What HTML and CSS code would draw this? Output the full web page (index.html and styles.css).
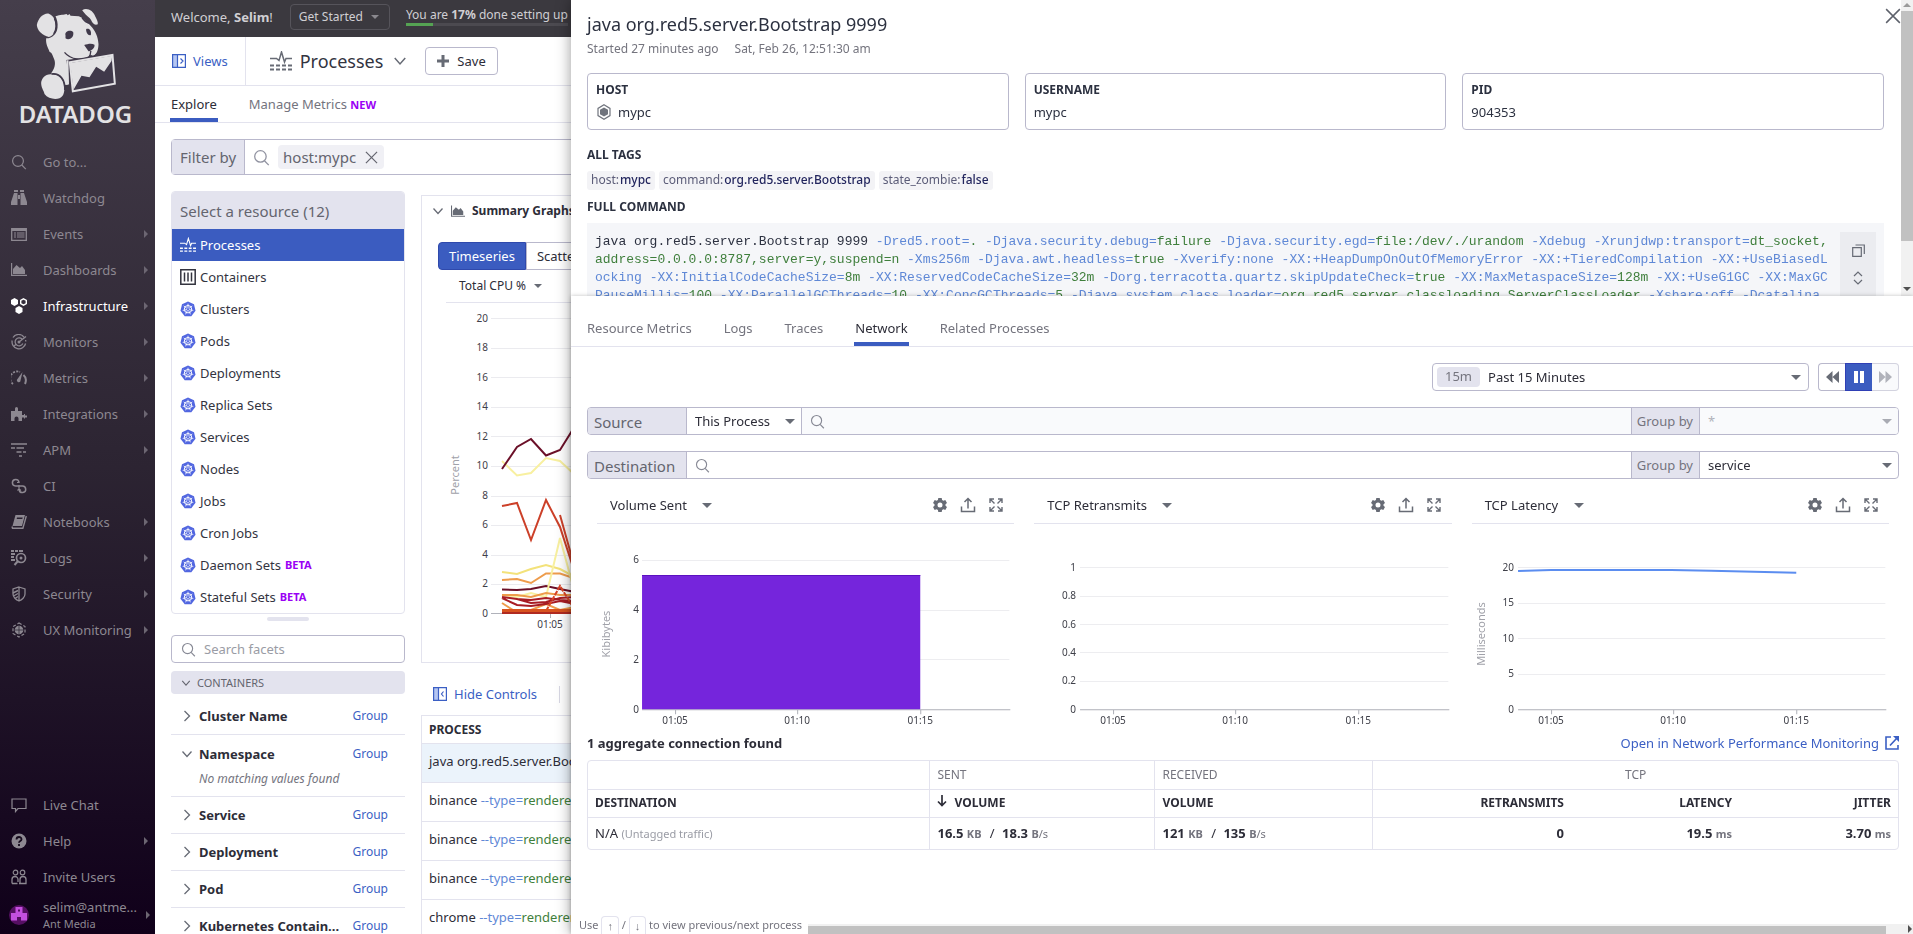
FILE: index.html
```html
<!DOCTYPE html>
<html lang="en">
<head>
  <meta charset="UTF-8">
  <meta name="viewport" content="width=device-width, initial-scale=1.0">
  <title>Processes | Datadog</title>
  <link rel="stylesheet" href="styles.css">
</head>
<body>
  <!-- shared icons -->
  <svg class="defs" aria-hidden="true">
    <symbol id="i-search" viewBox="0 0 16 16"><circle cx="7" cy="7" r="5.4" fill="none" stroke="currentColor" stroke-width="1.2"/><path d="M10.8 11l4 4.2" fill="none" stroke="currentColor" stroke-width="1.2"/></symbol>
    <symbol id="i-down" viewBox="0 0 12 12"><path d="M1.5 3.5L6 8.5l4.500-5" fill="none" stroke="currentColor" stroke-width="1.3"/></symbol>
    <symbol id="i-right" viewBox="0 0 12 12"><path d="M3.500 1L8.500 6l-5 5" fill="none" stroke="currentColor" stroke-width="1.3"/></symbol>
    <symbol id="i-close" viewBox="0 0 14 14"><path d="M1 1l12 12M13 1L1 13" fill="none" stroke="currentColor" stroke-width="1.3"/></symbol>
    <symbol id="i-process" viewBox="0 0 22 20"><path d="M0 7.500h6.500L9 9.500 11.500 1l3 10 1.500-3.500h6" fill="none" stroke="currentColor" stroke-width="1.500"/><path d="M0 14.500h4m2 0h4m2 0h4m2 0h4M0 18.500h4m2 0h4m2 0h4m2 0h4" stroke="currentColor" stroke-width="1.800"/></symbol>
    <symbol id="i-area" viewBox="0 0 16 14"><path d="M.6 0v12.400H16" fill="none" stroke="currentColor" stroke-width="1.200"/><path d="M2 11V6l3.500-4L9 5l2-2 3 4v4z" fill="currentColor"/></symbol>
    <symbol id="i-kube" viewBox="0 0 16 16">
      <path d="M8 .4l6 2.900 1.500 6.500-4.200 5.400H4.700L.5 9.800 2 3.300z" fill="#5166e0"/>
      <circle cx="8" cy="8.200" r="3.700" fill="none" stroke="#fff" stroke-width="1"/>
      <path d="M8 2.700v4.500M12.300 4.900L8.700 7.600M13.300 9.500L9 8.500M10.400 13.300L8.500 9.200M5.600 13.300l1.900-4.100M2.700 9.500L7 8.500M3.700 4.900l3.600 2.700" stroke="#fff" stroke-width=".8"/>
    </symbol>
    <symbol id="i-gear" viewBox="0 0 16 16"><path fill="currentColor" fill-rule="evenodd" d="M6.300 1h3.400l.4 2 1.300.700 1.900-.700 1.700 3-1.500 1.300v1.500L15 10l-1.700 3-1.900-.700-1.300.700-.4 2H6.300l-.4-2-1.300-.700-1.900.700L1 10l1.500-1.300V7.300L1 6l1.700-3 1.900.700L5.900 3zM8 5.500a2.500 2.500 0 100 5 2.500 2.500 0 000-5z"/></symbol>
    <symbol id="i-share" viewBox="0 0 16 16"><path d="M1.500 9.500v5h13v-5M8 11.500V2M4.500 5L8 1.500 11.500 5" fill="none" stroke="currentColor" stroke-width="1.500"/></symbol>
    <symbol id="i-expand" viewBox="0 0 16 16"><path d="M2 6V2h4M10 2h4v4M14 10v4h-4M6 14H2v-4M2 2l4.500 4.500M14 2L9.500 6.500M14 14L9.500 9.500M2 14l4.500-4.500" fill="none" stroke="currentColor" stroke-width="1.400"/></symbol>
  </svg>

  <div class="app">
    <nav class="sidebar">
      <a class="logo" href="#">
        <svg viewBox="100 15 260 285" aria-hidden="true">
          <g fill="#e3e2e4">
            <path d="M150 38c-17-2-32 14-36 34 1 17 17 32 36 36 12-3 20-16 21-28 1-18-5-36-21-42z"/>
            <path d="M170 46C185 40 196 42 203 39L207 43 212 39 215 44 240 46C252 50 264 62 276 75C289 89 298 107 299 129C299 144 294 165 278 165L272 161 262 179 206 183 210 250 198 252C196 232 180 216 156 218C166 205 172 190 166 175C160 158 158 155 152 152C148 140 140 130 142 112C162 112 174 96 176 80C178 66 174 54 170 46z"/>
            <path d="M250 28c14-10 34 2 39 18 4 8 9 16 8 24-14 5-17-9-24-18-8-6-16-14-23-24z"/>
            <path d="M160 220c-20-3-34 14-33 28 1 15 10 24 10 31 10 14 30 17 45 13 15-6 16-27 14-40-2-18-18-32-36-32z"/>
          </g>
          <path d="M158 219c25-4 41 17 40 48M167 52c7 12 7 35-2 47M250 50c7 12 18 16 25 17" fill="none" stroke="#40394a" stroke-width="5"/>
          <path d="M200 103c-4-12 15-18 23-10 4 18-13 26-23 19zM262 84c9-4 17 4 14 18-8 3-15-7-14-18zM256 132c10-3 22-6 31-1 2 10-11 19-18 20z" fill="#40394a"/>
          <path d="M197 154c20 24 54 25 76 13l3-17M276 164c8 5 14 2 20-6" fill="none" stroke="#40394a" stroke-width="4"/>
          <path d="M202 177l144-19 6 94-132 25z" fill="#40394a"/>
          <path d="M203 178h6l1 72-8 2z" fill="#e3e2e4"/>
          <path d="M213 184l128-22 7 86-126 23z" fill="none" stroke="#e3e2e4" stroke-width="6"/>
          <path d="M214 186l126-22-2 16-22 32-24-15-20 32-24-5-24 42z" fill="#e3e2e4"/>
        </svg>
        <span>DATADOG</span>
      </a>
      <ul class="nav">
        <li><a href="#"><svg><use href="#i-search"/></svg>Go to...</a></li>
        <li><a href="#"><svg viewBox="0 0 16 16"><path fill="currentColor" d="M3 0h4v2H3zm6 0h4v2H9zM3 3h3.500v12H0v-3zm6.500 0H13l3 9v3H9.500zM7 5h2v4H7z"/></svg>Watchdog</a></li>
        <li><a href="#"><svg viewBox="0 0 16 16"><path d="M.7 2.700h14.600v11.600H.7z" fill="none" stroke="currentColor" stroke-width="1.300"/><path d="M1 3h14v2H1zM3 6.500h2v1H3zm3 0h7.500v1H6zM3 8.500h2v1H3zm3 0h7.500v1H6zM3 10.500h2v1H3zm3 0h7.500v1H6z" fill="currentColor"/></svg>Events<i></i></a></li>
        <li><a href="#"><svg><use href="#i-area"/></svg>Dashboards<i></i></a></li>
        <li class="active"><a href="#"><svg viewBox="0 0 16 16"><path fill="currentColor" d="M3.500 0L7 2v4L3.500 8 0 6V2zM8 8l3.500 2v4L8 16l-3.500-2v-4z"/><path d="M12.500.8l2.800 1.600v3.200l-2.800 1.600-2.800-1.600V2.400z" fill="none" stroke="currentColor" stroke-width="1.400"/></svg>Infrastructure<i></i></a></li>
        <li><a href="#"><svg viewBox="0 0 16 16"><path d="M13 3.200A6.700 6.700 0 002 3.500M1.200 6.500a6.800 6.800 0 0013.400 3M11 5a4 4 0 10.800 4.500M8 8l7-5.500M14.600 6l.2 1.500M3 12.500l1.500-1.800" fill="none" stroke="currentColor" stroke-width="1.300"/><circle cx="8" cy="8" r="1.500" fill="currentColor"/></svg>Monitors<i></i></a></li>
        <li><a href="#"><svg viewBox="0 0 16 16"><path d="M2 14A7 7 0 019 2" fill="none" stroke="currentColor" stroke-width="1.800" stroke-dasharray="2 1.200"/><path d="M12.500 5c2.300 2 3 5.500 1.500 9" fill="none" stroke="currentColor" stroke-width="2"/><path d="M11.500 2L9.300 11.500a2 2 0 01-3.500-1.500z" fill="currentColor"/></svg>Metrics<i></i></a></li>
        <li><a href="#"><svg viewBox="0 0 16 16"><path fill="currentColor" d="M0 5h4V2.500a1.500 1.500 0 113 0V5h4v4h2V8h1v1.500h2v2h-2v1h-1v-1h-2V15H7.500v-2.500a2 2 0 00-4 0V15H0z"/></svg>Integrations<i></i></a></li>
        <li><a href="#"><svg viewBox="0 0 16 16"><path d="M0 2h16M0 6h4m1.500 0H13M5.500 10h5m1.500 0h3M8 14h3" stroke="currentColor" stroke-width="1.700"/></svg>APM<i></i></a></li>
        <li><a href="#"><svg viewBox="0 0 16 16"><path d="M4.500 8A3.300 3.300 0 118 4.500M4.500 8h7a3.300 3.300 0 11-3.300 4" fill="none" stroke="currentColor" stroke-width="1.500"/><path d="M8 11V7m-1.500 5.500L8 11l2 1.500M6 4.500h2.500" stroke="currentColor" fill="none" stroke-width="1.200"/></svg>CI</a></li>
        <li><a href="#"><svg viewBox="0 0 16 16"><path fill="currentColor" fill-rule="evenodd" d="M4.500 1h9.500L11 12H1.500zM6 3.500L5.700 5h5.600l.4-1.500z"/><path d="M15.300 2l-3.400 12.200H1.500L1 12.500" fill="none" stroke="currentColor" stroke-width="1.400"/></svg>Notebooks<i></i></a></li>
        <li><a href="#"><svg viewBox="0 0 16 16"><path d="M0 1h3m1 0h3m1 0h4M0 4h4M0 7h3M0 10h4" stroke="currentColor" stroke-width="1.800"/><circle cx="10" cy="8" r="4.500" fill="none" stroke="currentColor" stroke-width="1.700"/><path d="M7 11l-3.500 4" stroke="currentColor" stroke-width="2"/><circle cx="10" cy="8" r="1.500" fill="currentColor"/></svg>Logs<i></i></a></li>
        <li><a href="#"><svg viewBox="0 0 16 16"><path d="M8 1l6 2v5c0 3-3 6-6 7-3-1-6-4-6-7V3zM8 1v14" fill="none" stroke="currentColor" stroke-width="1.300"/><path d="M2 7l5-2.500M2.500 10L7 7.500M4 12.500l3-2" stroke="currentColor" stroke-width="1.400"/></svg>Security<i></i></a></li>
        <li><a href="#"><svg viewBox="0 0 16 16"><circle cx="8" cy="8" r="4.300" fill="currentColor"/><path d="M8 1l6 3.500v7L8 15l-6-3.500v-7z" fill="none" stroke="currentColor" stroke-width="1.200" stroke-dasharray="3 2"/><path d="M4 8h8M8 4v8" stroke="#2a2230" stroke-width=".7"/></svg>UX Monitoring<i></i></a></li>
      </ul>
      <ul class="nav nav-bottom">
        <li><a href="#"><svg viewBox="0 0 16 16"><path d="M1 2h14v9.500H7L4.500 14.500v-3H1z" fill="none" stroke="currentColor" stroke-width="1.200"/></svg>Live Chat</a></li>
        <li><a href="#"><svg viewBox="0 0 16 16"><circle cx="8" cy="8" r="7.500" fill="currentColor"/><path d="M5.500 6.500a2.500 2.500 0 115 0c0 1.500-2.500 1.700-2.500 3.200" fill="none" stroke="#150a1c" stroke-width="1.800"/><path d="M7.100 11h1.800v1.900H7.100z" fill="#150a1c"/></svg>Help<i></i></a></li>
        <li><a href="#"><svg viewBox="0 0 16 16"><circle cx="4.500" cy="3.500" r="2.300" fill="none" stroke="currentColor" stroke-width="1.200"/><circle cx="11.500" cy="3.500" r="2.300" fill="none" stroke="currentColor" stroke-width="1.200"/><path d="M1 14.500v-4a3 3 0 016 0V13M1 14.500h5.500M9 14.500v-4a3 3 0 016 0v4H8" fill="none" stroke="currentColor" stroke-width="1.300"/></svg>Invite Users</a></li>
        <li class="user"><a href="#">
          <svg viewBox="0 0 20 20"><circle cx="10" cy="10" r="10" fill="#560f63"/><path fill="#c44fe0" fill-rule="evenodd" d="M6.500 2h7v6H18v7.500h-6V12H8v3.500H2V8h4.500zM9 4.500v2h2v-2z"/></svg>
          <span>selim@antme...<small>Ant Media</small></span><i></i></a></li>
      </ul>
    </nav>

    <div class="page">
      <header class="topbar">
        <span>Welcome, <b>Selim</b>!</span>
        <button type="button" class="get-started">Get Started <span class="caret"></span></button>
        <div class="setup">You are <b>17%</b> done setting up
          <div class="progress"><div class="progress-fill"></div></div>
        </div>
      </header>

      <div class="titlebar">
        <a class="views" href="#"><svg width="14" height="14" viewBox="0 0 14 14"><path fill="#b5c6f2" d="M1 1h4v12H1z"/><path d="M.6.600h12.800v12.800H.600zM5.500.600v12.800M8.500 4.500L11 7l-2.500 2.500" fill="none" stroke="currentColor" stroke-width="1.200"/></svg>Views</a>
        <h1><svg width="22" height="20"><use href="#i-process"/></svg>Processes<svg width="14" height="14"><use href="#i-down"/></svg></h1>
        <button type="button" class="save"><svg width="12" height="12" viewBox="0 0 12 12"><path d="M6 0v12M0 6h12" stroke="#676b75" stroke-width="3"/></svg>Save</button>
      </div>

      <div class="tabs main-tabs">
        <a class="tab active" href="#">Explore</a>
        <a class="tab" href="#">Manage Metrics <b class="flag">NEW</b></a>
      </div>

      <div class="filter">
        <label for="filter">Filter by</label>
        <svg width="17" height="17"><use href="#i-search"/></svg>
        <span class="chip">host:mypc <svg width="13" height="13"><use href="#i-close"/></svg></span>
        <input id="filter" type="text">
      </div>

      <div class="columns">
        <aside class="facets">
          <div class="resources">
            <h2>Select a resource (12)</h2>
            <a class="selected" href="#"><svg><use href="#i-process"/></svg>Processes</a>
            <a href="#"><svg viewBox="0 0 16 16"><path d="M.8.800h14.400v14.400H.800zM4.500 3.500v9M8 3.500v9M11.500 3.500v9" fill="none" stroke="#33343f" stroke-width="1.500"/></svg>Containers</a>
            <a href="#"><svg><use href="#i-kube"/></svg>Clusters</a>
            <a href="#"><svg><use href="#i-kube"/></svg>Pods</a>
            <a href="#"><svg><use href="#i-kube"/></svg>Deployments</a>
            <a href="#"><svg><use href="#i-kube"/></svg>Replica Sets</a>
            <a href="#"><svg><use href="#i-kube"/></svg>Services</a>
            <a href="#"><svg><use href="#i-kube"/></svg>Nodes</a>
            <a href="#"><svg><use href="#i-kube"/></svg>Jobs</a>
            <a href="#"><svg><use href="#i-kube"/></svg>Cron Jobs</a>
            <a href="#"><svg><use href="#i-kube"/></svg>Daemon Sets <b class="flag">BETA</b></a>
            <a href="#"><svg><use href="#i-kube"/></svg>Stateful Sets <b class="flag">BETA</b></a>
          </div>
          <div class="handle"></div>
          <div class="facet-search">
            <svg width="15" height="15"><use href="#i-search"/></svg>
            <input type="text" placeholder="Search facets" aria-label="Search facets">
          </div>
          <div class="facet-group"><svg width="10" height="10"><use href="#i-down"/></svg>CONTAINERS</div>
          <div class="facet"><svg><use href="#i-right"/></svg><b>Cluster Name</b><a href="#">Group</a></div>
          <div class="facet open"><svg><use href="#i-down"/></svg><b>Namespace</b><a href="#">Group</a><em>No matching values found</em></div>
          <div class="facet"><svg><use href="#i-right"/></svg><b>Service</b><a href="#">Group</a></div>
          <div class="facet"><svg><use href="#i-right"/></svg><b>Deployment</b><a href="#">Group</a></div>
          <div class="facet"><svg><use href="#i-right"/></svg><b>Pod</b><a href="#">Group</a></div>
          <div class="facet"><svg><use href="#i-right"/></svg><b>Kubernetes Contain...</b><a href="#">Group</a></div>
        </aside>

        <main class="content">
          <section class="summary">
            <h3><svg width="12" height="12"><use href="#i-down"/></svg><svg width="14" height="13"><use href="#i-area"/></svg>Summary Graphs</h3>
            <div class="segmented">
              <button type="button" class="on">Timeseries</button><button type="button">Scatter Plot</button>
            </div>
            <button type="button" class="metric">Total CPU % <span class="caret"></span></button>
            <svg class="cpu-chart" width="600" height="340" viewBox="0 0 600 340">
              <g stroke="#ebebef">
                <path d="M68 15.500H600M68 45.500H600M68 74.500H600M68 104.500H600M68 133.500H600M68 163.500H600M68 193.500H600M68 222.500H600M68 252.500H600M68 281.500H600"/>
                <path d="M68 310.500H600M127.500 310v5" stroke="#b0b2ba"/>
              </g>
              <g class="axis" text-anchor="end">
                <text x="65" y="19">20</text><text x="65" y="48">18</text><text x="65" y="78">16</text><text x="65" y="107">14</text><text x="65" y="137">12</text><text x="65" y="166">10</text><text x="65" y="196">8</text><text x="65" y="225">6</text><text x="65" y="255">4</text><text x="65" y="284">2</text><text x="65" y="314">0</text>
              </g>
              <text class="axis" x="127" y="325" text-anchor="middle">01:05</text>
              <text class="axis-title" transform="rotate(-90 36 172)" x="36" y="172" text-anchor="middle">Percent</text>
              <g fill="none" stroke-width="2">
                <path stroke="#f8f0a0" d="M79 158l15 14.500 14-2.500 15-15 14 3 15 14"/>
                <path stroke="#6b1028" d="M79 166l15-22 14-8 15 16.500 14-5.500 15-24"/>
                <path stroke="#cc4029" d="M79 203l15-3 14 37 15-40 14 27 12 37M137 212l14 50"/>
                <path stroke="#f3e27a" d="M79 269l15 2 14-5 15-4 14 4 15 8"/>
                <path stroke="#ee9c4c" d="M79 277l15-1 14 4 15-9.500h14l15 5"/>
                <path stroke="#6b1028" d="M79 286.500l15 .5 14-1 15-3 14 3 15 3"/>
                <path stroke="#f8f0a0" d="M79 292l15 2 14-4 15 4 14-59 14 52"/>
                <path stroke="#ee9c4c" d="M79 292h15l14 2 15-4 14 2h15M79 300l11 7h18l15-6 14 6 15-3"/>
                <path stroke="#a81c24" d="M79 294l15 2 14 1 15-2 14 2 15 1M79 295l15 7 14 1 15-2 14-3 15 3M79 294l15 2 14 4 15-1 14-4 15-1"/>
                <path stroke="#d84427" d="M123 308l14-25 15 24" stroke-dasharray="5 1"/>
                <path stroke="#d8531f" d="M79 307h80M79 309h80"/>
                <path stroke="#b02a20" d="M79 310h80"/>
              </g>
            </svg>
          </section>

          <div class="table-bar">
            <a href="#"><svg width="14" height="14" viewBox="0 0 14 14"><path fill="#b5c6f2" d="M1 1h4v12H1z"/><path d="M.6.600h12.800v12.800H.600zM5.500.600v12.800M10.500 4.500L8.500 7l2 2.500" fill="none" stroke="currentColor" stroke-width="1.200"/></svg>Hide Controls</a>
            <span class="divider"></span>
          </div>
          <table class="processes">
            <thead><tr><th>PROCESS</th></tr></thead>
            <tbody>
              <tr class="current"><td>java org.red5.server.Bootstrap 9999</td></tr>
              <tr><td>binance <span class="opt">--type=</span><span class="val">renderer</span></td></tr>
              <tr><td>binance <span class="opt">--type=</span><span class="val">renderer</span></td></tr>
              <tr><td>binance <span class="opt">--type=</span><span class="val">renderer</span></td></tr>
              <tr><td>chrome <span class="opt">--type=</span><span class="val">renderer</span></td></tr>
            </tbody>
          </table>
        </main>
      </div>
    </div>
  </div>

  <!-- process side panel -->
  <div class="drawer" role="dialog" aria-label="Process details">
    <div class="drawer-head">
      <div class="drawer-info">
        <h2>java org.red5.server.Bootstrap 9999</h2>
        <p class="started"><span>Started 27 minutes ago</span><span>Sat, Feb 26, 12:51:30 am</span></p>
        <div class="cards">
          <div class="card"><h4>HOST</h4><p><svg width="16" height="16" viewBox="0 0 16 16"><path d="M8 .8l6 3.600v7.200l-6 3.600-6-3.600V4.400z" fill="none" stroke="#70747d" stroke-width="1.200"/><path d="M8 3.500l4 2.200v4.600l-4 2.200-4-2.200V5.700z" fill="#70747d"/></svg>mypc</p></div>
          <div class="card"><h4>USERNAME</h4><p>mypc</p></div>
          <div class="card"><h4>PID</h4><p>904353</p></div>
        </div>
        <h4 class="label">ALL TAGS</h4>
        <div class="tags">
          <span>host:<b>mypc</b></span><span>command:<b>org.red5.server.Bootstrap</b></span><span>state_zombie:<b>false</b></span>
        </div>
        <h4 class="label">FULL COMMAND</h4>
        <div class="command">
          <code>java org.red5.server.Bootstrap 9999 <span class="opt">-Dred5.root=</span><span class="val">.</span> <span class="opt">-Djava.security.debug=</span><span class="val">failure</span> <span class="opt">-Djava.security.egd=</span><span class="val">file:/dev/./urandom</span> <span class="opt">-Xdebug</span> <span class="opt">-Xrunjdwp:transport=</span><span class="val">dt_socket,address=0.0.0.0:8787,server=y,suspend=n</span> <span class="opt">-Xms256m</span> <span class="opt">-Djava.awt.headless=</span><span class="val">true</span> <span class="opt">-Xverify:none</span> <span class="opt">-XX:+HeapDumpOnOutOfMemoryError</span> <span class="opt">-XX:+TieredCompilation</span> <span class="opt">-XX:+UseBiasedLocking</span> <span class="opt">-XX:InitialCodeCacheSize=</span><span class="val">8m</span> <span class="opt">-XX:ReservedCodeCacheSize=</span><span class="val">32m</span> <span class="opt">-Dorg.terracotta.quartz.skipUpdateCheck=</span><span class="val">true</span> <span class="opt">-XX:MaxMetaspaceSize=</span><span class="val">128m</span> <span class="opt">-XX:+UseG1GC</span> <span class="opt">-XX:MaxGCPauseMillis=</span><span class="val">100</span> <span class="opt">-XX:ParallelGCThreads=</span><span class="val">10</span> <span class="opt">-XX:ConcGCThreads=</span><span class="val">5</span> <span class="opt">-Djava.system.class.loader=</span><span class="val">org.red5.server.classloading.ServerClassLoader</span> <span class="opt">-Xshare:off</span> <span class="opt">-Dcatalina</span></code>
          <div class="command-tools">
            <button type="button" aria-label="Copy"><svg width="13" height="13" viewBox="0 0 13 13"><path d="M.7 3.700h8.600v8.600H.700zM3.500 1h8.800v9" fill="none" stroke="currentColor" stroke-width="1.200"/></svg></button>
            <button type="button" aria-label="Expand"><svg width="10" height="14" viewBox="0 0 10 14"><path d="M1 5l4-4 4 4M1 9l4 4 4-4" fill="none" stroke="currentColor" stroke-width="1.200"/></svg></button>
          </div>
        </div>
      </div>
      <button type="button" class="close" aria-label="Close"><svg width="16" height="16"><use href="#i-close"/></svg></button>
      <div class="vscroll"><i class="up"></i><div class="vthumb"></div><i class="down"></i></div>
    </div>

    <div class="drawer-body">
      <div class="tabs drawer-tabs">
        <a class="tab" href="#">Resource Metrics</a>
        <a class="tab" href="#">Logs</a>
        <a class="tab" href="#">Traces</a>
        <a class="tab active" href="#">Network</a>
        <a class="tab" href="#">Related Processes</a>
      </div>

      <div class="network">
        <div class="time">
          <button type="button" class="range"><span class="badge">15m</span>Past 15 Minutes<span class="caret"></span></button>
          <div class="playback">
            <button type="button" aria-label="Back"><svg width="13" height="12" viewBox="0 0 13 12"><path fill="currentColor" d="M6.500 0v12L0 6zM13 0v12L6.500 6z"/></svg></button>
            <button type="button" class="on" aria-label="Pause"><svg width="12" height="12" viewBox="0 0 12 12"><path fill="currentColor" d="M1 0h4v12H1zM7 0h4v12H7z"/></svg></button>
            <button type="button" disabled aria-label="Forward"><svg width="13" height="12" viewBox="0 0 13 12"><path fill="currentColor" d="M0 0v12l6.500-6zM6.500 0v12L13 6z"/></svg></button>
          </div>
        </div>

        <div class="query">
          <label class="query-label" for="source">Source</label>
          <div class="select scope"><select aria-label="Source scope"><option>This Process</option></select></div>
          <div class="query-input off"><svg width="15" height="15"><use href="#i-search"/></svg><input id="source" type="text" disabled></div>
          <label class="group-label" for="source-group">Group by</label>
          <div class="select group off"><select id="source-group" disabled><option>*</option></select></div>
        </div>
        <div class="query">
          <label class="query-label" for="destination">Destination</label>
          <div class="query-input"><svg width="15" height="15"><use href="#i-search"/></svg><input id="destination" type="text"></div>
          <label class="group-label" for="dest-group">Group by</label>
          <div class="select group"><select id="dest-group"><option>service</option></select></div>
        </div>

        <div class="charts">
          <section class="chart">
            <header><button type="button">Volume Sent <span class="caret"></span></button><svg><use href="#i-gear"/></svg><svg><use href="#i-share"/></svg><svg><use href="#i-expand"/></svg></header>
            <svg class="plot" viewBox="0 0 417 206">
              <path d="M45 36.500H412M45 86.500H412M45 135.500H412" stroke="#ededf0"/>
              <path d="M45 185.500H413M78.500 185v5M200.500 185v5M323.500 185v5" stroke="#aeb0b8" fill="none"/>
              <path d="M45 51h278v134H45z" fill="#7525dc"/><path d="M45 51.500h278" stroke="#5c10c0"/>
              <g class="axis" text-anchor="end"><text x="42" y="39">6</text><text x="42" y="89">4</text><text x="42" y="139">2</text><text x="42" y="189">0</text></g>
              <g class="axis" text-anchor="middle"><text x="78" y="200">01:05</text><text x="200" y="200">01:10</text><text x="323" y="200">01:15</text></g>
              <text class="axis-title" transform="rotate(-90 13 110)" x="13" y="110" text-anchor="middle">Kibibytes</text>
            </svg>
          </section>
          <section class="chart">
            <header><button type="button">TCP Retransmits <span class="caret"></span></button><svg><use href="#i-gear"/></svg><svg><use href="#i-share"/></svg><svg><use href="#i-expand"/></svg></header>
            <svg class="plot" viewBox="0 0 417 206">
              <path d="M46 43.500H414M46 72.500H414M46 100.500H414M46 128.500H414M46 157.500H414" stroke="#ededf0"/>
              <path d="M46 185.500H415M79.500 185v5M201.500 185v5M324.500 185v5" stroke="#aeb0b8" fill="none"/>
              <g class="axis" text-anchor="end"><text x="42" y="47">1</text><text x="42" y="75">0.8</text><text x="42" y="104">0.6</text><text x="42" y="132">0.4</text><text x="42" y="160">0.2</text><text x="42" y="189">0</text></g>
              <g class="axis" text-anchor="middle"><text x="79" y="200">01:05</text><text x="201" y="200">01:10</text><text x="324" y="200">01:15</text></g>
            </svg>
          </section>
          <section class="chart">
            <header><button type="button">TCP Latency <span class="caret"></span></button><svg><use href="#i-gear"/></svg><svg><use href="#i-share"/></svg><svg><use href="#i-expand"/></svg></header>
            <svg class="plot" viewBox="0 0 417 206">
              <path d="M46 43.500H413M46 79.500H413M46 114.500H413M46 150.500H413" stroke="#ededf0"/>
              <path d="M46 185.500H414M79.500 185v5M201.500 185v5M324.500 185v5" stroke="#aeb0b8" fill="none"/>
              <path d="M46 47l33-1h120l40 .8 85 2" fill="none" stroke="#5b8df0" stroke-width="2"/>
              <g class="axis" text-anchor="end"><text x="42" y="47">20</text><text x="42" y="82">15</text><text x="42" y="118">10</text><text x="42" y="153">5</text><text x="42" y="189">0</text></g>
              <g class="axis" text-anchor="middle"><text x="79" y="200">01:05</text><text x="201" y="200">01:10</text><text x="324" y="200">01:15</text></g>
              <text class="axis-title" transform="rotate(-90 13 110)" x="13" y="110" text-anchor="middle">Milliseconds</text>
            </svg>
          </section>
        </div>

        <div class="found">
          <b>1 aggregate connection found</b>
          <a href="#">Open in Network Performance Monitoring<svg width="14" height="14" viewBox="0 0 14 14"><path d="M6 1H1v12h12V9M5 9.500L12 2" fill="none" stroke="currentColor" stroke-width="1.600"/><path d="M8 0h6v6z" fill="currentColor"/></svg></a>
        </div>

        <div class="table-frame">
          <table class="connections">
            <colgroup><col><col class="c-sent"><col class="c-recv"><col class="c-retr"><col class="c-lat"><col class="c-jit"></colgroup>
            <thead>
              <tr class="groups"><th></th><th>SENT</th><th>RECEIVED</th><th colspan="3" class="center">TCP</th></tr>
              <tr><th>DESTINATION</th><th><svg width="10" height="12" viewBox="0 0 10 12"><path d="M5 0v10M1 6.500L5 10.500l4-4" fill="none" stroke="currentColor" stroke-width="1.700"/></svg>VOLUME</th><th>VOLUME</th><th class="num">RETRANSMITS</th><th class="num plain">LATENCY</th><th class="num plain">JITTER</th></tr>
            </thead>
            <tbody>
              <tr><td>N/A <small>(Untagged traffic)</small></td>
                <td><b>16.5</b> <small><b>KB</b></small> <span class="slash">/</span> <b>18.3</b> <small><b>B</b>/s</small></td>
                <td><b>121</b> <small><b>KB</b></small> <span class="slash">/</span> <b>135</b> <small><b>B</b>/s</small></td>
                <td class="num"><b>0</b></td><td class="num plain"><b>19.5</b> <small><b>ms</b></small></td><td class="num plain"><b>3.70</b> <small><b>ms</b></small></td></tr>
            </tbody>
          </table>
        </div>
      </div>

      <footer class="hint">
        <p>Use <kbd>↑</kbd> / <kbd>↓</kbd> to view previous/next process</p>
        <div class="hscroll"><div class="hthumb"></div><i></i></div>
      </footer>
    </div>
  </div>
</body>
</html>
```

FILE: styles.css
```css
* { box-sizing: border-box; }
body { margin: 0; height: 100vh; overflow: hidden; font-family: "Noto Sans", sans-serif; font-size: 13px; line-height: 18px; color: #2d2d38; background: #fff; }
h1, h2, h3, h4, p, ul { margin: 0; padding: 0; font-weight: normal; }
ul { list-style: none; }
a { color: #3b5fc4; text-decoration: none; }
button, input, select { font: inherit; color: inherit; margin: 0; padding: 0; border: none; background: none; }
input { outline: none; min-width: 0; }
svg { flex: none; }
.defs { position: absolute; width: 0; height: 0; }
.caret { display: inline-block; border: 5px solid transparent; border-top-color: #676b75; border-bottom: none; }
.flag { color: #9a00f5; font-size: 11px; }
.opt { color: #5f88d6; }
.val { color: #3f7f3c; }

.app { display: flex; height: 100vh; }

/* left navigation */
.sidebar { flex: none; width: 155px; display: flex; flex-direction: column; background: linear-gradient(#453e4b, #2c2432 50%, #10001a); color: #8d8891; }
.logo { height: 144px; padding: 6px 4px 0 0; display: flex; flex-direction: column; align-items: center; color: #e3e2e4; font-size: 24px; line-height: 25px; font-weight: 600; }
.logo svg { width: 87px; height: 95px; }
.nav a { display: flex; align-items: center; height: 36px; padding: 0 7px 0 11px; color: inherit; }
.nav svg { width: 16px; height: 16px; margin-right: 16px; }
.nav .active { color: #fff; }
.nav i { margin-left: auto; border: 4px solid transparent; border-left-color: #6c6672; border-right: none; }
.nav-bottom { margin-top: auto; }
.nav .user a { height: 39px; padding: 0 5px 0 9px; }
.nav .user svg { width: 20px; height: 20px; margin-right: 14px; }
.user small { display: block; font-size: 11px; line-height: 15px; }

/* page behind the panel */
.page { flex: 1; min-width: 0; overflow: hidden; }
.topbar { height: 37px; background: #3b393f; color: #d0cfd3; padding: 0 16px; display: flex; align-items: center; white-space: nowrap; }
.topbar > span { margin-bottom: 3px; }
.get-started { display: flex; align-items: center; gap: 8px; height: 26px; margin: 0 16px 3px 17px; padding: 0 10px 0 8px; border: 1px solid #56545b; border-radius: 4px; font-size: 12px; }
.get-started .caret { border-width: 4px; border-bottom: none; border-top-color: #8a888e; }
.setup { font-size: 12px; margin-bottom: 6px; line-height: 16px; padding-top: 2px; }
.progress { height: 3px; background: #4c4a50; }
.progress-fill { width: 17%; height: 3px; background: #55a353; }
.titlebar { height: 49px; display: flex; align-items: center; border-bottom: 1px solid #e3e3ee; }
.views { display: flex; align-items: center; gap: 7px; height: 48px; padding: 0 17px; border-right: 1px solid #e3e3ee; }
h1 { display: flex; align-items: center; gap: 8px; font-size: 18px; margin: 0 18px 0 24px; color: #33343f; }
h1 svg { color: #676b75; }
h1 svg:last-child { margin-left: 2px; }
.save { display: flex; align-items: center; gap: 8px; height: 28px; padding: 0 11px; border: 1px solid #b9b8cc; border-radius: 4px; }
.tabs { display: flex; border-bottom: 1px solid #e3e3ee; padding: 0 15px; }
.tab { color: #74747e; padding: 0 1px; }
.tab.active { color: #2d2d38; border-bottom: 4px solid #3b5cc0; }
.main-tabs { height: 37px; gap: 30px; line-height: 36px; }
.main-tabs .tab.active { height: 36px; }
.filter { display: flex; align-items: center; height: 36px; margin: 16px; border: 1px solid #b9b8cc; border-radius: 4px; font-size: 15px; color: #64656f; }
.filter label { align-self: stretch; line-height: 34px; padding: 0 8px; background: #e3e3ee; border-right: 1px solid #b9b8cc; }
.filter > svg { margin: 0 8px; color: #9092a0; }
.filter input { flex: 1; }
.chip { display: flex; align-items: center; gap: 9px; height: 24px; padding: 0 6px 0 5px; border-radius: 4px; background: #f0f0f5; }
.columns { display: flex; gap: 16px; padding: 0 16px; }
.facets { flex: none; width: 234px; }
.resources { border: 1px solid #e3e3ee; border-radius: 4px; overflow: hidden; }
.resources h2 { height: 37px; line-height: 38px; padding-left: 8px; background: #e3e3ee; color: #64656f; font-size: 15px; }
.resources a { display: flex; align-items: center; height: 32px; padding-left: 8px; color: #33343f; }
.resources a svg { width: 16px; height: 16px; margin-right: 4px; }
.resources .selected { background: #3b5cc0; color: #fff; }
.resources .flag { margin-left: 4px; }
.handle { width: 42px; height: 4px; margin: 3px auto 14px; border-radius: 2px; background: #e3e3ee; }
.facet-search { display: flex; align-items: center; gap: 8px; height: 28px; padding: 0 9px; border: 1px solid #b9b8cc; border-radius: 4px; color: #878995; }
.facet-search input { flex: 1; }
.facet-search input::placeholder { color: #9a9ca5; }
.facet-group { display: flex; align-items: center; gap: 6px; height: 23px; margin: 8px 0 4px; padding-left: 10px; border-radius: 4px; background: #e3e3ee; color: #64656f; font-size: 11px; }
.facet { display: grid; grid-template-columns: 12px 1fr auto; column-gap: 6px; align-items: center; height: 37px; padding: 0 17px 0 10px; border-bottom: 1px solid #e3e3ee; }
.facet svg { width: 12px; height: 12px; color: #676b75; }
.facet a { font-size: 12px; }
.facet.open { height: 62px; padding-top: 6px; padding-bottom: 5px; }
.facet em { grid-column: 2 / 4; font-size: 12px; color: #74747e; }

.content { flex: 1; min-width: 0; }
.summary { margin-top: 4px; height: 468px; padding-left: 1px; border: 1px solid #e3e3ee; overflow: hidden; }
.summary h3 { display: flex; align-items: center; gap: 7px; height: 30px; padding-left: 9px; font-size: 12px; font-weight: bold; white-space: nowrap; }
.summary h3 svg { color: #676b75; }
.segmented { display: flex; margin: 16px 0 0 15px; }
.segmented button { height: 28px; padding: 0 10px; border: 1px solid #b9b8cc; white-space: nowrap; }
.segmented .on { background: #3b5cc0; border-color: #2f49ac; color: #fff; border-radius: 4px 0 0 4px; }
.metric { display: flex; align-items: center; gap: 8px; width: 100%; height: 33px; margin-left: 23px; padding-left: 13px; border-bottom: 1px solid #e3e3ee; font-size: 12px; }
.metric .caret { border-width: 4px; border-bottom: none; }
.cpu-chart { display: block; }
.axis { font-size: 10px; fill: #3f4049; }
.axis-title { font-size: 11px; fill: #a0a1a9; }
.table-bar { display: flex; align-items: center; gap: 22px; height: 52px; padding: 10px 0 0 12px; }
.table-bar a { display: flex; align-items: center; gap: 7px; white-space: nowrap; }
.divider { width: 1px; height: 17px; background: #d8d8e4; }
.processes { width: 100%; border-collapse: collapse; border-left: 1px solid #e3e3ee; white-space: nowrap; }
.processes th { height: 28px; padding: 0 7px; text-align: left; font-size: 12px; border-top: 1px solid #e3e3ee; }
.processes td { height: 39px; padding: 0 7px 4px; border-top: 1px solid #e3e3ee; }
.processes .current { background: #ebf3fb; }

/* side panel */
.drawer { position: fixed; top: 0; bottom: 0; left: 571px; right: 0; display: flex; flex-direction: column; background: #fff; box-shadow: 0 0 14px rgba(0, 0, 0, .4); }
.drawer-head { position: relative; flex: none; display: flex; height: 296px; overflow: hidden; color: #2c3140; }
.drawer-info { flex: 1; min-width: 0; padding: 12px 17px 0 16px; }
.drawer-info h2 { font-size: 18px; line-height: 24px; }
.started { display: flex; gap: 16px; margin: 4px 0 16px; font-size: 12px; line-height: 17px; color: #74747e; }
.cards { display: flex; gap: 16px; margin-bottom: 16px; }
.card { flex: 1; height: 57px; padding: 7px 8px; border: 1px solid #b9b8cc; border-radius: 4px; }
.drawer-info h4 { font-size: 12px; font-weight: bold; }
.card p { display: flex; align-items: center; gap: 6px; margin-top: 4px; }
.tags { display: flex; gap: 4px; margin: 7px 0 8px; font-size: 12px; }
.tags span { height: 19px; padding: 0 4px; border-radius: 3px; background: #f3f3f6; color: #5b5c78; }
.tags b { margin-left: 1px; font-weight: 500; color: #23265e; }
.command { display: flex; align-items: flex-start; margin-top: 7px; padding: 9px 8px 0; height: 120px; background: #f5f6f9; }
.command code { flex: 1; font-family: "Liberation Mono", monospace; font-size: 13px; line-height: 18px; word-break: break-all; margin-right: 10px; padding-top: 1px; }
.command-tools { width: 36px; height: 110px; padding-top: 6px; background: #ebecf0; display: flex; flex-direction: column; align-items: center; color: #676b75; }
.command-tools button { height: 28px; }
.close { position: absolute; top: 8px; right: 12px; height: 16px; color: #5d616b; }
.close svg { display: block; }
.vscroll { flex: none; width: 12px; display: flex; flex-direction: column; align-items: center; background: #f1f1f1; padding: 3px 0 5px; }
.vscroll i { border: 4px solid transparent; border-top: none; border-bottom-color: #9a9a9a; }
.vscroll .down { border: 4px solid transparent; border-bottom: none; border-top-color: #505050; margin-top: auto; }
.vthumb { width: 12px; height: 230px; margin-top: 4px; background: #c1c1c1; }
.drawer-body { position: relative; flex: 1; min-height: 0; display: flex; flex-direction: column; background: #fff; box-shadow: 0 0 4px rgba(0, 0, 0, .25); }
.drawer-tabs { flex: none; height: 51px; gap: 30px; padding: 15px 15px 0; line-height: 35px; }
.drawer-tabs .tab.active { height: 35px; }
.network { flex: 1; min-height: 0; padding: 16px 14px 0 16px; }
.time { display: flex; justify-content: flex-end; gap: 9px; margin-bottom: 16px; }
.range { display: flex; align-items: center; width: 377px; height: 28px; padding: 0 7px 0 4px; border: 1px solid #b9b8cc; border-radius: 4px; }
.range .caret { margin-left: auto; }
.badge { height: 20px; line-height: 18px; padding: 0 8px; margin-right: 8px; border-radius: 4px; background: #e3e3ee; color: #74747e; }
.playback { display: flex; }
.playback button { width: 27px; height: 28px; display: flex; align-items: center; justify-content: center; border: 1px solid #b9b8cc; border-right: none; border-radius: 4px 0 0 4px; color: #676b75; }
.playback .on { background: #3b5cc0; border-color: #2f3fb5; border-radius: 0; color: #fff; }
.playback button:disabled { background: #f9fafc; border: 1px solid #d3d3df; border-left: none; border-radius: 0 4px 4px 0; color: #b0b2ba; }
.query { display: flex; height: 28px; margin-bottom: 16px; border: 1px solid #b9b8cc; border-radius: 4px; overflow: hidden; }
.query > * { border-right: 1px solid #b9b8cc; }
.query > :last-child { border-right: none; }
.query-label { width: 99px; padding-left: 6px; line-height: 29px; background: #e3e3ee; color: #64656f; font-size: 15px; }
.select { position: relative; }
.select::after { content: ""; position: absolute; right: 6px; top: 11px; border: 5px solid transparent; border-top-color: #676b75; border-bottom: none; pointer-events: none; }
.select select { width: 100%; height: 26px; padding: 0 8px; appearance: none; opacity: 1; }
.scope { width: 115px; }
.group { width: 198px; }
.off { background: #f9fafc; color: #b0b2ba; }
.off::after { border-top-color: #a9abb3; }
.query-input { flex: 1; display: flex; align-items: center; padding: 0 8px; color: #878995; }
.query-input input { flex: 1; }
.group-label { padding: 0 6px 0 5px; line-height: 26px; background: #e3e3ee; color: #74747e; }
.charts { display: grid; grid-template-columns: repeat(3, 1fr); }
.chart { padding: 0 10px; }
.chart header { display: flex; align-items: center; gap: 12px; height: 29px; padding: 0 10px 8px 13px; border-bottom: 1px solid #e3e3ee; color: #676b75; }
.chart header button { margin-right: auto; color: #2d2d38; }
.chart header .caret { margin: 0 0 2px 12px; }
.chart header svg { width: 16px; height: 16px; }
.plot { display: block; width: 100%; }
.found { display: flex; justify-content: space-between; margin: 4px 0 8px; }
.found a { display: flex; align-items: center; gap: 6px; }
.table-frame { border: 1px solid #e3e3ee; border-radius: 4px; overflow: hidden; }
.connections { width: 100%; table-layout: fixed; border-collapse: collapse; }
.connections th { height: 28px; padding: 0 7px; text-align: left; font-size: 12px; border-bottom: 1px solid #e3e3ee; border-left: 1px solid #e3e3ee; }
.connections td { height: 32px; padding: 0 7px; border-left: 1px solid #e3e3ee; }
.connections th:first-child, .connections td:first-child, .connections .plain { border-left: none; }
.connections .groups th { font-weight: normal; color: #74747e; }
.connections .groups .center { text-align: center; }
.connections .num { text-align: right; }
.connections th svg { margin-right: 7px; }
.connections small { font-size: 11px; color: #74747e; }
.connections td:first-child small { color: #9a9ca5; }
.slash { margin: 0 4px 0 5px; }
.c-sent { width: 225px; }
.c-recv { width: 218px; }
.c-retr { width: 198px; }
.c-lat { width: 168px; }
.c-jit { width: 159px; }
.hint { flex: none; display: flex; align-items: flex-end; height: 18px; font-size: 11px; color: #74747e; }
.hint p { height: 18px; padding: 0 6px 0 8px; white-space: nowrap; line-height: 18px; }
.hint kbd { display: inline-block; height: 18px; padding: 0 5px; border: 1px solid #e3e3ee; border-bottom: none; border-radius: 4px 4px 0 0; font: inherit; line-height: 17px; vertical-align: top; }
.hscroll { flex: 1; display: flex; align-items: center; height: 10px; background: #f1f1f1; }
.hthumb { flex: 1; height: 8px; margin: 2px 22px 0 0; background: #c1c1c1; }
.hscroll i { margin-right: 1px; border: 4px solid transparent; border-right: none; border-left-color: #505050; }
```
